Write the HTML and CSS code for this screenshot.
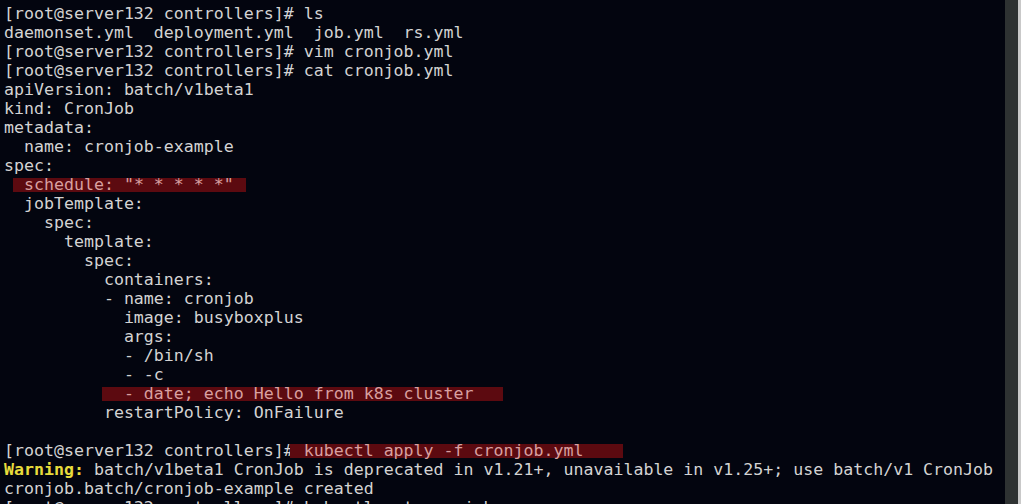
FILE: index.html
```html
<!DOCTYPE html>
<html>
<head>
<meta charset="utf-8">
<link rel="stylesheet" href="styles.css">
</head>
<body>
<div class="window">
  <pre class="term"><div class="ln">[root@server132 controllers]# ls</div><div class="ln">daemonset.yml  deployment.yml  job.yml  rs.yml</div><div class="ln">[root@server132 controllers]# vim cronjob.yml</div><div class="ln">[root@server132 controllers]# cat cronjob.yml</div><div class="ln">apiVersion: batch/v1beta1</div><div class="ln">kind: CronJob</div><div class="ln">metadata:</div><div class="ln">  name: cronjob-example</div><div class="ln">spec:</div><div class="ln">  <span class="hl hl-a">schedule: "* * * * *"</span></div><div class="ln">  jobTemplate:</div><div class="ln">    spec:</div><div class="ln">      template:</div><div class="ln">        spec:</div><div class="ln">          containers:</div><div class="ln">          - name: cronjob</div><div class="ln">            image: busyboxplus</div><div class="ln">            args:</div><div class="ln">            - /bin/sh</div><div class="ln">            - -c</div><div class="ln">            <span class="hl hl-b">- date; echo Hello from k8s cluster</span></div><div class="ln">          restartPolicy: OnFailure</div><div class="ln"> </div><div class="ln">[root@server132 controllers]#<span class="hl hl-c"> kubectl apply -f cronjob.yml</span></div><div class="ln"><span class="warn">Warning:</span> batch/v1beta1 CronJob is deprecated in v1.21+, unavailable in v1.25+; use batch/v1 CronJob</div><div class="ln">cronjob.batch/cronjob-example created</div><div class="ln">[root@server132 controllers]# kubectl get cronjob</div></pre>
  <div class="scrollbar"><div class="edge"></div></div>
</div>
</body>
</html>
```

FILE: styles.css
```css
html, body {
  margin: 0;
  padding: 0;
  background: #03050f;
  overflow: hidden;
}
.window {
  display: flex;
  width: 1021px;
  height: 504px;
  overflow: hidden;
  background: #03050f;
}
.term {
  flex: 1;
  margin: 0;
  padding: 4px 0 0 4px;
  font-family: "DejaVu Sans Mono", monospace;
  font-size: 16.6px;
  line-height: 19px;
  color: #d3d3d3;
  white-space: pre;
  border-left: 1px solid #1c2028;
  box-sizing: border-box;
  margin-left: -1px;
  overflow: hidden;
}
.ln {
  height: 19px;
}
.hl {
  display: inline-block;
  line-height: 14px;
  background: #5c0a10;
  color: #d9a0a0;
}
.hl-a {
  margin-left: -11px;
  padding-left: 11px;
  padding-right: 12px;
}
.hl-b {
  margin-left: -22px;
  padding-left: 22px;
  padding-right: 29px;
}
.hl-c {
  margin-left: -4px;
  padding-left: 4px;
  padding-right: 40px;
}
.warn {
  color: #e8dc3c;
  font-weight: bold;
}
.scrollbar {
  width: 16px;
  flex: none;
  display: flex;
  justify-content: flex-end;
  background: #2e3232;
}
.edge {
  width: 3px;
  background: #c9c9c9;
}
```
